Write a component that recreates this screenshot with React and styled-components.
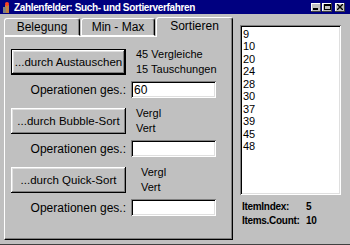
import React from "react";
import styled, { createGlobalStyle, css } from "styled-components";

const GlobalStyle = createGlobalStyle`
  html, body {
    margin: 0;
    padding: 0;
    background: #c0c0c0;
  }
  * {
    box-sizing: border-box;
  }
`;

const Window = styled.div`
  width: 350px;
  height: 245px;
  background: #c0c0c0;
  font-family: "Liberation Sans", Arial, sans-serif;
  color: #000;
  overflow: hidden;
  border-bottom: 1px solid #404040;
`;

const TitleBar = styled.div`
  height: 14px;
  background: #000080;
  display: flex;
  align-items: center;
  padding-left: 2px;
`;

const TitleText = styled.span`
  color: #fff;
  font-weight: bold;
  font-size: 10px;
  letter-spacing: -0.35px;
  margin-left: 3px;
  flex: 1;
  white-space: nowrap;
`;

const TitleButtons = styled.div`
  display: flex;
  gap: 1px;
  margin-right: 5px;
`;

const TitleButton = styled.div`
  width: 10px;
  height: 9px;
  background: #c0c0c0;
  box-shadow: inset -1px -1px #404040, inset 1px 1px #fff;
  margin-left: ${({ gap }) => (gap ? "2px" : "0")};
  display: flex;
  align-items: center;
  justify-content: center;
`;

const Body = styled.div`
  display: flex;
  padding: 2px 0 0 4px;
`;

const TabControl = styled.div`
  width: 229px;
  display: flex;
  flex-direction: column;
`;

const TabRow = styled.div`
  height: 20px;
  display: flex;
  align-items: flex-end;
  position: relative;
  z-index: 1;
`;

const Tab = styled.div`
  height: ${({ active }) => (active ? "20px" : "18px")};
  width: ${({ w }) => w}px;
  margin-right: ${({ active }) => (active ? "0" : "1px")};
  margin-bottom: ${({ active }) => (active ? "-1px" : "0")};
  background: #c0c0c0;
  border-radius: 3px 3px 0 0;
  border-top: 1px solid #fff;
  border-left: 1px solid #fff;
  border-right: 1px solid #000;
  box-shadow: inset -1px 0 #808080;
  display: flex;
  align-items: center;
  justify-content: center;
  font-size: 12px;
  padding-bottom: ${({ active }) => (active ? "3px" : "0")};
  ${({ active }) =>
    !active &&
    css`
      border-bottom: 1px solid #fff;
    `}
`;

const Panel = styled.div`
  height: 204px;
  border-top: 1px solid #fff;
  border-left: 1px solid #fff;
  border-right: 1px solid #000;
  border-bottom: 1px solid #000;
  box-shadow: inset -1px -1px #808080;
  padding: 12px 0 0 6px;
  display: flex;
  flex-direction: column;
  gap: 10px;
`;

const Group = styled.div`
  display: flex;
  flex-direction: column;
`;

const ButtonRow = styled.div`
  display: flex;
  align-items: flex-start;
`;

const SortButton = styled.button`
  width: 115px;
  height: 26px;
  background: #c0c0c0;
  font-family: inherit;
  font-size: 11.5px;
  color: #000;
  padding: 0;
  white-space: nowrap;
  border: ${({ focused }) => (focused ? "1px solid #000" : "none")};
  box-shadow: inset -1px -1px #000, inset 1px 1px #fff,
    inset -2px -2px #808080, inset 2px 2px #dfdfdf;
`;

const Stats = styled.div`
  margin-left: ${({ shift }) => 10 + (shift || 0)}px;
  margin-top: -2px;
  font-size: 11px;
  line-height: 15px;
  white-space: nowrap;
`;

const InputRow = styled.div`
  display: flex;
  align-items: center;
  margin-top: 4px;
`;

const Label = styled.label`
  width: 115px;
  text-align: right;
  font-size: 12px;
  white-space: nowrap;
`;

const Field = styled.input`
  width: 85px;
  height: 17px;
  margin-left: 5px;
  background: #fff;
  border: none;
  outline: none;
  padding: 1px 3px 0;
  font-family: inherit;
  font-size: 12px;
  color: #000;
  box-shadow: inset 1px 1px #808080, inset -1px -1px #fff,
    inset 2px 2px #000, inset -2px -2px #dfdfdf;
`;

const Side = styled.div`
  width: 101px;
  margin-left: 7px;
  padding-top: 9px;
  display: flex;
  flex-direction: column;
`;

const ListBox = styled.div`
  height: 170px;
  background: #fff;
  box-shadow: inset 1px 1px #808080, inset -1px -1px #fff,
    inset 2px 2px #000, inset -2px -2px #dfdfdf;
  padding: 3px 3px;
  font-size: 11px;
  line-height: 12.45px;
`;

const Item = styled.div`
  height: 12.45px;
`;

const Info = styled.div`
  margin-top: 5px;
  font-size: 10px;
  font-weight: bold;
  letter-spacing: -0.3px;
  line-height: 14px;
`;

const InfoRow = styled.div`
  display: flex;
  padding-left: 2px;
`;

const InfoKey = styled.span`
  width: 64px;
`;

const numbers = [9, 10, 20, 24, 28, 30, 37, 39, 45, 48];

const groups = [
  {
    title: "...durch Austauschen",
    lines: ["45 Vergleiche", "15 Tauschungen"],
    value: "60",
    focused: true,
  },
  { title: "...durch Bubble-Sort", lines: ["Vergl", "Vert"], value: "" },
  {
    title: "...durch Quick-Sort",
    lines: ["Vergl", "Vert"],
    value: "",
    shift: 5,
  },
];

const AppIcon = () => (
  <svg width="9" height="11" viewBox="0 0 9 11">
    <rect x="3" y="3" width="4" height="8" fill="#c08040" />
    <rect x="1" y="5" width="3" height="6" fill="#808080" />
    <circle cx="5" cy="2" r="2" fill="#ff4020" />
  </svg>
);

const App = () => {
  return (
    <>
      <GlobalStyle />
      <Window>
        <TitleBar>
          <AppIcon />
          <TitleText>Zahlenfelder: Such- und Sortierverfahren</TitleText>
          <TitleButtons>
            <TitleButton>
              <svg width="6" height="6" viewBox="0 0 6 6">
                <rect x="0" y="4" width="5" height="2" fill="#000" />
              </svg>
            </TitleButton>
            <TitleButton>
              <svg width="7" height="6" viewBox="0 0 7 6">
                <rect x="0.5" y="0.5" width="6" height="5" fill="none" stroke="#000" />
                <rect x="0" y="0" width="7" height="2" fill="#000" />
              </svg>
            </TitleButton>
            <TitleButton gap>
              <svg width="6" height="6" viewBox="0 0 6 6">
                <path d="M0 0 L6 6 M6 0 L0 6" stroke="#000" strokeWidth="1.4" />
              </svg>
            </TitleButton>
          </TitleButtons>
        </TitleBar>
        <Body>
          <TabControl>
            <TabRow>
              <Tab w={76}>Belegung</Tab>
              <Tab w={74}>Min - Max</Tab>
              <Tab w={77} active>
                Sortieren
              </Tab>
            </TabRow>
            <Panel>
              {groups.map((g) => (
                <Group key={g.title}>
                  <ButtonRow>
                    <SortButton focused={g.focused}>{g.title}</SortButton>
                    <Stats shift={g.shift}>
                      {g.lines.map((l) => (
                        <div key={l}>{l}</div>
                      ))}
                    </Stats>
                  </ButtonRow>
                  <InputRow>
                    <Label>Operationen ges.:</Label>
                    <Field defaultValue={g.value} />
                  </InputRow>
                </Group>
              ))}
            </Panel>
          </TabControl>
          <Side>
            <ListBox>
              {numbers.map((n) => (
                <Item key={n}>{n}</Item>
              ))}
            </ListBox>
            <Info>
              <InfoRow>
                <InfoKey>ItemIndex:</InfoKey>
                <span>5</span>
              </InfoRow>
              <InfoRow>
                <InfoKey>Items.Count:</InfoKey>
                <span>10</span>
              </InfoRow>
            </Info>
          </Side>
        </Body>
      </Window>
    </>
  );
};

export default App;
